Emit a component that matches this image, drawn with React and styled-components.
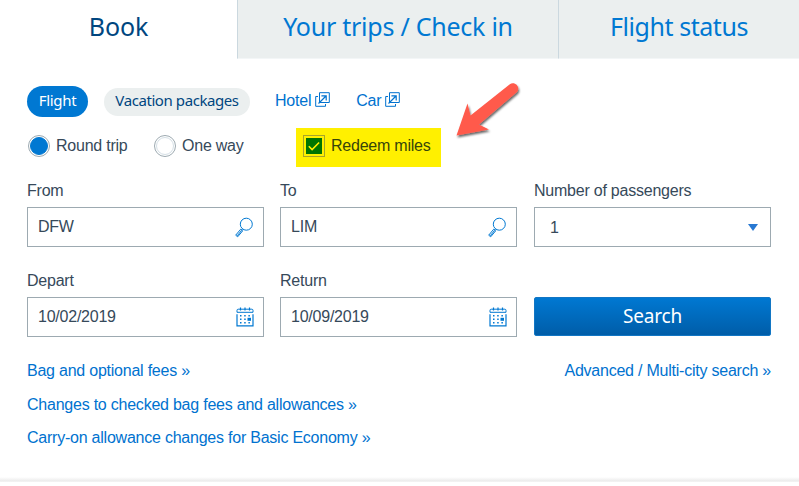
import React, { useState } from "react";
import styled, { createGlobalStyle } from "styled-components";

const GlobalStyle = createGlobalStyle`
  * {
    box-sizing: border-box;
  }

  body {
    margin: 0;
    background: #fff;
    color: #36495a;
    font-family: "Liberation Sans", Arial, sans-serif;
    font-size: 16px;
    line-height: 18px;
    letter-spacing: -0.23px;
  }
`;

const Page = styled.div`
  height: 486px;
  overflow: hidden;
`;

const Tabs = styled.nav`
  display: grid;
  grid-template-columns: 237px 321px 1fr;
  height: 60px;
`;

const Tab = styled.a`
  height: ${props => (props.$active ? "60px" : "59px")};
  padding-top: 7px;
  border-left: ${props => (props.$active ? "none" : "1px solid #cbd8df")};
  border-bottom: ${props => (props.$active ? "none" : "1px solid #f3f6f7")};
  background: ${props => (props.$active ? "#fff" : "#ebefef")};
  color: ${props => (props.$active ? "#00467f" : "#0078d2")};
  font-family: "Noto Sans", sans-serif;
  font-size: 25px;
  line-height: 38px;
  letter-spacing: ${props => props.$spacing}px;
  text-align: center;
  white-space: nowrap;
`;

const Panel = styled.form`
  height: 417px;
  padding: 26px 28px 0 27px;
`;

const Modes = styled.div`
  display: flex;
  align-items: center;
  height: 31px;
`;

const Pill = styled.button`
  width: ${props => (props.$active ? 61 : 146)}px;
  height: ${props => (props.$active ? 31 : 28)}px;
  margin-right: ${props => (props.$active ? 16 : 25)}px;
  padding: 0 0 3px;
  border: 0;
  border-radius: 16px;
  background: ${props => (props.$active ? "#0078d2" : "#ebefef")};
  color: ${props => (props.$active ? "#fff" : "#00467f")};
  font-family: "Noto Sans", sans-serif;
  font-size: 15px;
  letter-spacing: ${props => (props.$active ? -0.3 : -0.42)}px;
  white-space: nowrap;
`;

const Link = styled.a`
  color: #0072cf;
  white-space: nowrap;
`;

const ModeLink = styled(Link)`
  display: flex;
  align-items: center;
  gap: 4px;
  margin-right: 26px;
  padding-bottom: 2px;

  svg {
    margin-bottom: 2px;
  }
`;

const Options = styled.div`
  display: flex;
  align-items: center;
  height: 40px;
  margin-top: 10px;
`;

const RadioLabel = styled.label`
  display: flex;
  align-items: center;
  gap: 6px;
  width: ${props => props.$width}px;
  padding-bottom: 2px;
  white-space: nowrap;
`;

const Radio = styled.span`
  display: flex;
  flex: none;
  align-items: center;
  justify-content: center;
  width: 22px;
  height: 22px;
  margin-left: 1px;
  border: 1px solid #9daab1;
  border-radius: 50%;

  &::after {
    content: "";
    width: 16px;
    height: 16px;
    border: 1px solid ${props => (props.$checked ? "#0078d2" : "#d5dfe6")};
    border-radius: 50%;
    background: ${props => (props.$checked ? "#0078d2" : "#fff")};
  }
`;

const Redeem = styled.label`
  display: flex;
  align-items: center;
  gap: 6px;
  width: 145px;
  height: 39px;
  padding: 0 0 3px 7px;
  background: #fff000;
  color: #36450a;
  white-space: nowrap;
`;

const Checkbox = styled.span`
  display: flex;
  width: 22px;
  height: 22px;
  padding: 2px;
  border: 1px solid #a7a52b;
`;

const Fields = styled.div`
  display: grid;
  grid-template-columns: 253px 254px 237px;
  margin-top: 14px;
`;

const Field = styled.label`
  display: flex;
  flex-direction: column;
  width: 237px;
  height: 90px;
`;

const Caption = styled.span`
  height: 26px;
  padding-top: 1px;
`;

const Box = styled.span`
  display: flex;
  align-items: center;
  justify-content: space-between;
  height: 40px;
  padding: 0 9px 0 ${props => (props.$select ? 15 : 10)}px;
  border: 1px solid #9daab1;
`;

const Value = styled.span`
  padding-top: ${props => (props.$select ? 2 : 0)}px;
`;

const Caret = styled.span`
  margin-right: 3px;
  border: 5.5px solid transparent;
  border-top: 7px solid #2878d2;
  border-bottom: 0;
`;

const SearchButton = styled.button`
  height: 39px;
  margin-top: 26px;
  padding: 0 0 2px;
  border: 1px solid #1276c4;
  border-radius: 2px;
  background: linear-gradient(#0078d2, #005da8);
  color: #fff;
  font-family: "Noto Sans", sans-serif;
  font-size: 19px;
  letter-spacing: -0.2px;
`;

const Footer = styled.div`
  display: flex;
  justify-content: space-between;
  padding-top: 1px;
`;

const Links = styled.div`
  display: flex;
  flex-direction: column;
  gap: 15.5px;
`;

const Divider = styled.div`
  height: 5px;
  background: linear-gradient(#fff, #ebebeb 80%, #f8f8f8);
`;

const Arrow = styled.svg`
  position: absolute;
  top: 76px;
  left: 448px;
`;

const ExternalIcon = () => (
  <svg width="15" height="15" viewBox="0 0 15 15" fill="none" stroke="#0072cf">
    <path d="M4.5.7h9.8v9.8H4.5z" />
    <path d="M3 4.5H.7v9.8h9.8V12" />
    <path d="M3.5 11.5 11 4M6.4 3.8h4.8v4.8" strokeWidth="1.2" />
  </svg>
);

const SearchIcon = () => (
  <svg width="20" height="21" viewBox="0 0 20 21" fill="none" stroke="#0078d2">
    <circle cx="12.3" cy="7.2" r="6" />
    <path d="m8.5 11.8-1.2 1.5M6.7 12.2l2 1.6-5 6-2-1.6zM7.5 13.5l-4.3 5.3" />
  </svg>
);

const CalendarIcon = () => (
  <svg width="18" height="20" viewBox="0 0 18 20" fill="none" stroke="#0078d2">
    <path d="M1 5.3V3.4c0-.8.4-1.2 1.2-1.2h13.6c.8 0 1.2.4 1.2 1.2v1.9z" />
    <path d="M4.5.4v3M9 .4v3M13.5.4v3" strokeWidth="1.2" />
    <path d="M1 7.3v11.6h16V7.3" strokeWidth="1.2" />
    <path
      d="M4 8.8h1.5M8.2 8.8h1.5M12.4 8.8h1.5M4 12.3h1.5M8.2 12.3h1.5M4 15.8h1.5M8.2 15.8h1.5M12.4 15.8h1.5"
      strokeWidth="1.6"
    />
    <path d="M11.5 12.3h3.5" strokeWidth="3" />
  </svg>
);

const CheckIcon = () => (
  <svg width="16" height="16" viewBox="0 0 16 16" fill="none">
    <path d="M0 0h16v16H0z" fill="#007500" />
    <path d="m2.8 8.2 3.3 3.3 7-7" stroke="#fff000" strokeWidth="1.6" />
  </svg>
);

const fields = [
  { label: "From", value: "DFW", icon: <SearchIcon /> },
  { label: "To", value: "LIM", icon: <SearchIcon /> },
  { label: "Number of passengers", value: "1", icon: <Caret />, select: true },
  { label: "Depart", value: "10/02/2019", icon: <CalendarIcon /> },
  { label: "Return", value: "10/09/2019", icon: <CalendarIcon /> }
];

const App = () => {
  const [trip, setTrip] = useState("round");

  return (
    <Page>
      <GlobalStyle />
      <Tabs>
        <Tab $active $spacing={-0.15}>
          Book
        </Tab>
        <Tab $spacing={-0.25}>Your trips / Check in</Tab>
        <Tab $spacing={-0.45}>Flight status</Tab>
      </Tabs>
      <Panel>
        <Modes>
          <Pill type="button" $active>
            Flight
          </Pill>
          <Pill type="button">Vacation packages</Pill>
          <ModeLink>
            Hotel <ExternalIcon />
          </ModeLink>
          <ModeLink>
            Car <ExternalIcon />
          </ModeLink>
        </Modes>
        <Options>
          <RadioLabel $width={126} onClick={() => setTrip("round")}>
            <Radio $checked={trip === "round"} />
            Round trip
          </RadioLabel>
          <RadioLabel $width={143} onClick={() => setTrip("oneway")}>
            <Radio $checked={trip === "oneway"} />
            One way
          </RadioLabel>
          <Redeem>
            <Checkbox>
              <CheckIcon />
            </Checkbox>
            Redeem miles
          </Redeem>
        </Options>
        <Fields>
          {fields.map(field => (
            <Field key={field.label}>
              <Caption>{field.label}</Caption>
              <Box $select={field.select}>
                <Value $select={field.select}>{field.value}</Value>
                {field.icon}
              </Box>
            </Field>
          ))}
          <SearchButton type="button">Search</SearchButton>
        </Fields>
        <Footer>
          <Links>
            <Link>Bag and optional fees »</Link>
            <Link>Changes to checked bag fees and allowances »</Link>
            <Link>Carry-on allowance changes for Basic Economy »</Link>
          </Links>
          <Link>Advanced / Multi-city search »</Link>
        </Footer>
      </Panel>
      <Divider />
      <Arrow width="80" height="70" viewBox="0 0 80 70">
        <defs>
          <filter id="arrowShadow" x="-20%" y="-20%" width="140%" height="140%">
            <feDropShadow dx="1" dy="2" stdDeviation="1.2" floodOpacity="0.6" />
          </filter>
        </defs>
        <path
          d="M8.500 59.500 19.500 27.500 22.500 39.500 61.500 8.500C66.500 4.500 73 11 69 16L31 48.500 41 53.500z"
          fill="#ff5a4b"
          filter="url(#arrowShadow)"
        />
      </Arrow>
    </Page>
  );
};

export default App;
